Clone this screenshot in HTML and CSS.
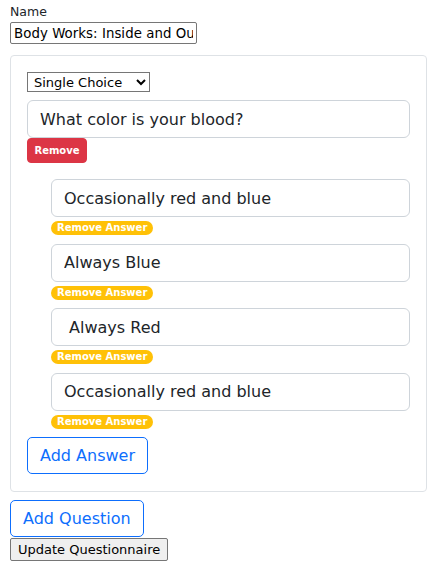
FILE: index.html
```html
<!DOCTYPE html>
<html>
<head>
<meta charset="utf-8">
<link rel="stylesheet" href="styles.css">
</head>
<body>
<div class="page">
  <div class="field">
    <label class="label">Name</label>
    <input class="name-input" type="text" value="Body Works: Inside and Outside">
  </div>
  <div class="card">
    <select class="type-select">
      <option>Single Choice</option>
    </select>
    <input class="control q-input" type="text" value="What color is your blood?">
    <button class="btn-remove">Remove</button>
    <div class="answers">
      <div class="answer">
        <input class="control" type="text" value="Occasionally red and blue">
        <span class="badge">Remove Answer</span>
      </div>
      <div class="answer">
        <input class="control" type="text" value="Always Blue">
        <span class="badge">Remove Answer</span>
      </div>
      <div class="answer">
        <input class="control" type="text" value=" Always Red">
        <span class="badge">Remove Answer</span>
      </div>
      <div class="answer">
        <input class="control" type="text" value="Occasionally red and blue">
        <span class="badge">Remove Answer</span>
      </div>
    </div>
    <button class="btn-outline">Add Answer</button>
  </div>
  <button class="btn-outline add-q">Add Question</button>
  <button class="btn-update">Update Questionnaire</button>
</div>
</body>
</html>
```

FILE: styles.css
```css
* { box-sizing: border-box; }
body {
  margin: 0;
  background: #fff;
  font-family: "DejaVu Sans", Verdana, sans-serif;
  color: #212529;
}
.page {
  padding: 3px 10px 0 10px;
  display: flex;
  flex-direction: column;
  align-items: flex-start;
}
.field {
  display: flex;
  flex-direction: column;
  align-items: flex-start;
}
.label {
  font-size: 12.5px;
  line-height: 18px;
}
.name-input {
  width: 187px;
  height: 22px;
  margin: 1px 0 0 0;
  padding: 1px 3px;
  border: 1px solid #767676;
  border-radius: 2px;
  font-family: "DejaVu Sans", sans-serif;
  font-size: 13.33px;
  letter-spacing: 0.05px;
  color: #000;
}
.card {
  margin-top: 11px;
  width: 417px;
  border: 1px solid #dee2e6;
  border-radius: 4px;
  padding: 16px 16px 17px 16px;
  display: flex;
  flex-direction: column;
  align-items: flex-start;
}
.type-select {
  width: 123px;
  height: 20px;
  font-family: "DejaVu Sans", sans-serif;
  font-size: 13px;
  color: #000;
  border: 1px solid #767676;
  border-radius: 0;
  background: #fff;
  padding: 0 2px;
  margin: 0 0 8px 0;
}
.control {
  width: 100%;
  height: 38px;
  padding: 6px 12px;
  border: 1px solid #ced4da;
  border-radius: 6px;
  font-family: "DejaVu Sans", sans-serif;
  font-size: 16px;
  color: #212529;
  margin: 0;
}
.btn-remove {
  margin: 0;
  width: 60px;
  height: 25px;
  background: #dc3545;
  border: 1px solid #dc3545;
  border-radius: 4px;
  color: #fff;
  font-family: "DejaVu Sans", sans-serif;
  font-weight: bold;
  font-size: 10px;
  padding: 0;
}
.answers {
  width: 100%;
  padding: 16px 0 0 24px;
  display: flex;
  flex-direction: column;
}
.answer {
  display: flex;
  flex-direction: column;
  align-items: flex-start;
  height: 64.5px;
}
.badge {
  margin-top: 4px;
  background: #ffc107;
  color: #fff;
  font-weight: bold;
  font-size: 10px;
  line-height: 14px;
  height: 14px;
  padding: 0 6px;
  border-radius: 8px;
}
.btn-outline {
  margin: 0;
  height: 37px;
  padding: 0 12px;
  background: #fff;
  border: 1px solid #0d6efd;
  border-radius: 5px;
  color: #0d6efd;
  font-family: "DejaVu Sans", sans-serif;
  font-size: 16px;
}
.add-q { margin-top: 8px; }
.btn-update {
  margin: 1px 0 0 0;
  height: 23px;
  padding: 0 7px;
  background: #efefef;
  border: 1px solid #767676;
  border-radius: 2px;
  color: #000;
  font-family: "DejaVu Sans", sans-serif;
  font-size: 13px;
}
```
